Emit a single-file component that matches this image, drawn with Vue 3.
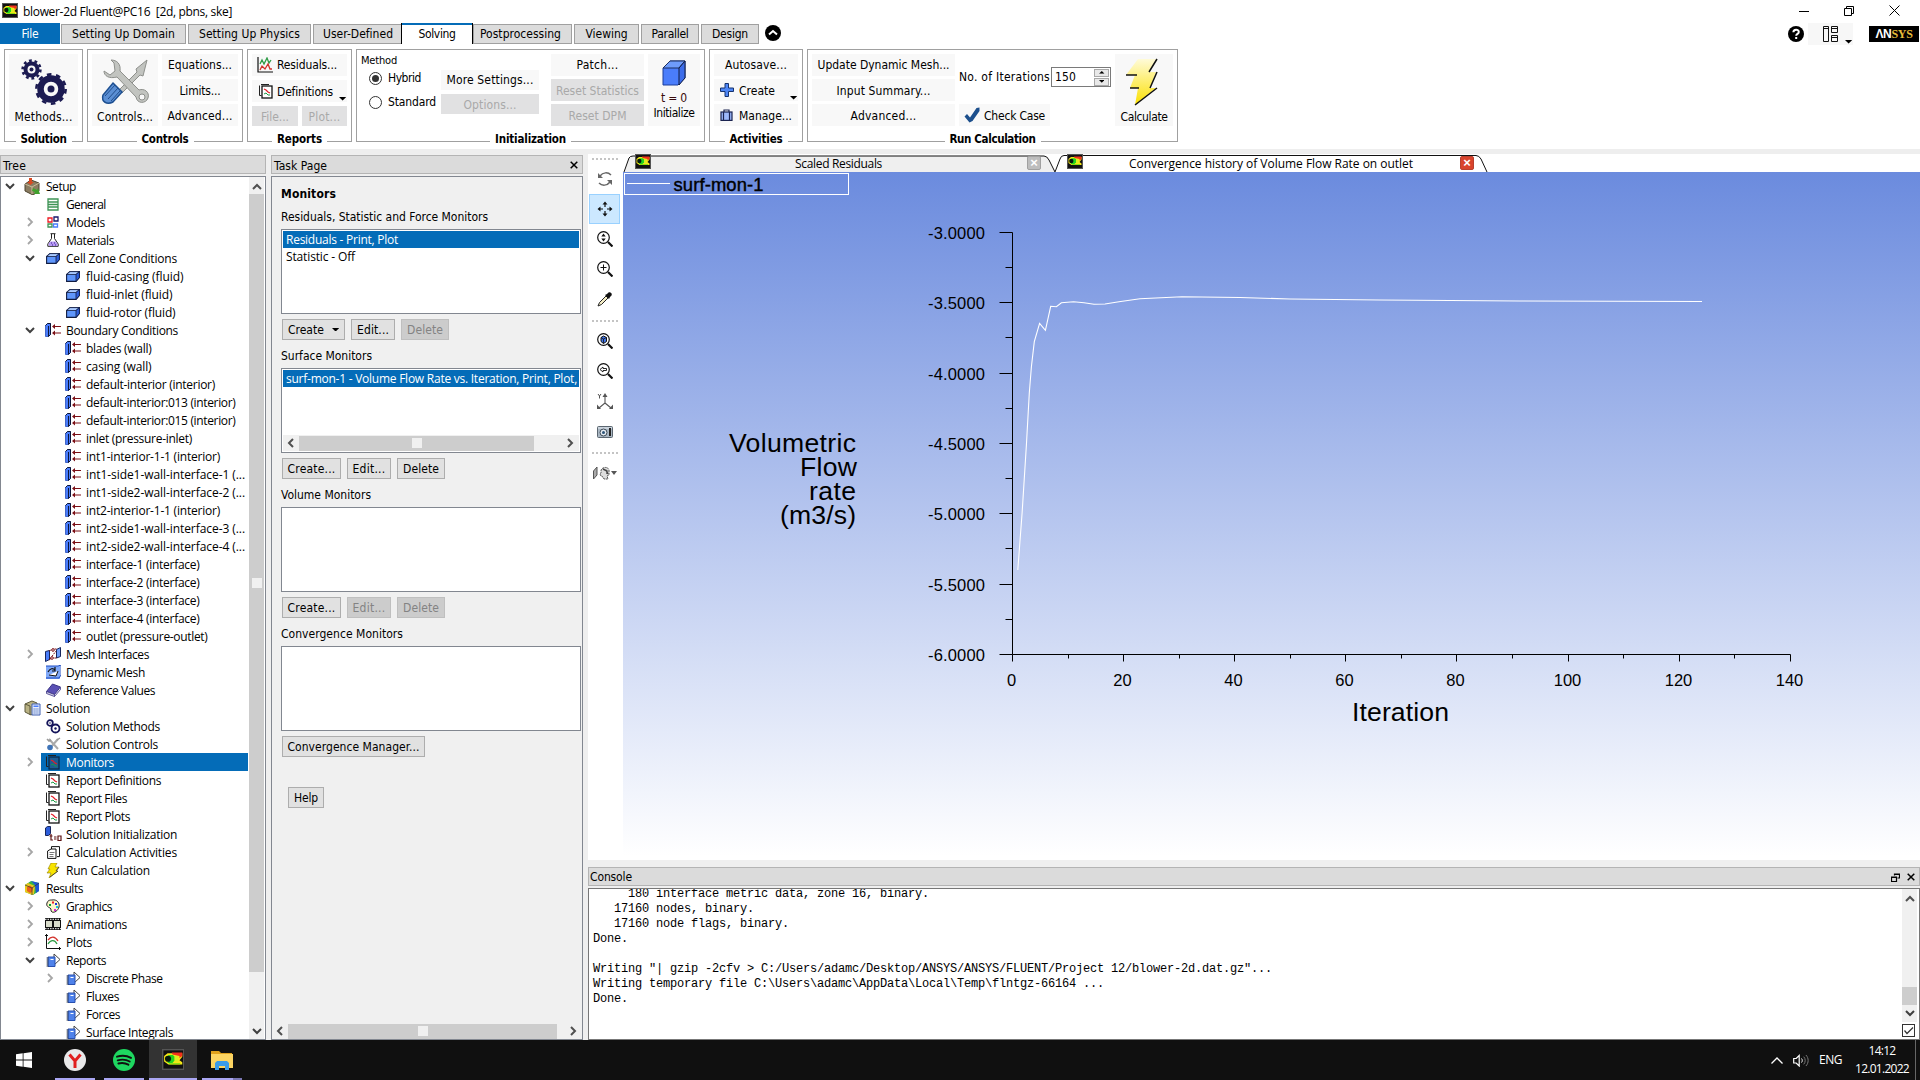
<script setup>
import { h } from 'vue'

/* Spreads the letters of a label so that it takes a given width in pixels. */
const vFit = {
  mounted(el, { value }) {
    if (!value) return
    const n = el.textContent.length
    el.style.letterSpacing = (value - el.getBoundingClientRect().width) / n + 'px'
  }
}

const page = '<path d="M.5 1.500v10h2M2 .500h8" fill="none" stroke="#222"/><rect x="3" y="2" width="10" height="12" fill="FILL" stroke="INK" stroke-width="1.300"/><path d="M5 5l2 1 2 2 2 1" stroke="#e0202a" fill="none" stroke-width="1.200"/><path d="M5 10l2-1 2 2 2 0" stroke="#1b9b45" fill="none"/>'
const gear = (cx, cy, r, w, c) => `<circle cx="${cx}" cy="${cy}" r="${r}" fill="none" stroke="${c}" stroke-width="${w}"/><circle cx="${cx}" cy="${cy}" r="${r + w / 2 + 0.9}" fill="none" stroke="${c}" stroke-width="2.600" stroke-dasharray="${((r + w / 2 + 0.9) * 6.2832) / 20}"/><circle cx="${cx}" cy="${cy}" r="${r / 3}" fill="${c}"/>`
const lens = '<circle cx="6.500" cy="6.500" r="5.800" fill="#fff" stroke="#111" stroke-width="1.200"/><path d="M11 11l4.500 4.500" stroke="#111" stroke-width="2.200"/>'

const icons = {
  fluent: [16, 16, '<rect x=".5" y=".5" width="15" height="14" fill="#111" stroke="#555"/><path d="M1.500 5L4 3h10.500v2.500L12.500 8l2 1.500V11H4.500l-3-2z" fill="#f5e616"/><path d="M7 2.500h7.500V5l-2 1.500V5l-5-1z" fill="#f0301c"/><path d="M4.500 4.300h3.200l1.300 1v3L7.500 10H4z" fill="#22d31f"/><path d="M9 5h2.500v4H9z" fill="#d8f020"/><circle cx="4.300" cy="7" r="2.200" fill="#061a0c"/><path d="M5 10h8v1H5z" fill="#8ce010"/>'],
  gears: [50, 50, gear(12.500, 11.500, 6, 4, '#1c1b52') + gear(32, 31, 10.500, 6.500, '#1c1b52')],
  tools: [50, 50, '<path d="M47 2L36 11l1 3-18 18 3 3 18-18 3 1z" fill="#c2c4c0" stroke="#8e908c"/><path d="M4 13l6 4 5-4-1-8-3-3c6 0 10 4 9 11l19 19c5-2 11 2 9 8-2 6-11 6-12-1l-19-20C9 21 4 18 4 13z" fill="#c2c4c0" stroke="#8e908c"/><circle cx="42" cy="39" r="3" fill="#f8f8f8" stroke="#8e908c"/><path d="M13 25l9 9-9 10c-6 3-12 0-10-7z" fill="#5b8fd4" stroke="#1d4f91" stroke-width="1.500"/><path d="M5 38l10-11M8 41l10-11M11 43l9-10" stroke="#234f8c"/>'],
  resid: [16, 16, '<path d="M1 0v15h15" fill="none" stroke="#111" stroke-width="1.200"/><path d="M3 7l2-4 2 4 3-6 2 5 2-3" fill="none" stroke="#2e9b46" stroke-width="1.300"/><path d="M3 13l2-4 3 3 3-5 2 5 2 0" fill="none" stroke="#d2322b" stroke-width="1.300"/>'],
  report: [14, 15, page.replace('FILL', '#fff').replace('INK', '#111')],
  reportSel: [14, 15, page.replace('FILL', '#1d5d93').replace('INK', '#0c2c4c')],
  cube: [24, 26, '<path d="M1 8l7-7h15v17l-7 7H1z" fill="#4a7dfb" stroke="#1c3f9a"/><path d="M1 8l7-7h15l-6 7z" fill="#6f9cfb" stroke="#1c2f60"/><path d="M17 8v17l6-7V1z" fill="#3c6cea" stroke="#111c40"/>'],
  plus: [14, 14, '<path d="M5 .5h3.500v4.500h5V8.500h-5v5H5v-5H.5V5H5z" fill="#4e86f5" stroke="#16336e"/>'],
  bag: [13, 12, '<rect x="1" y="3" width="11" height="8.400" fill="#9db9fb" stroke="#1a2350" stroke-width="1.200"/><path d="M4 3V1h5v2M3.500 3v8M9.500 3v8" fill="none" stroke="#1a2350" stroke-width="1.200"/>'],
  check: [16, 16, '<path d="M.5 9.500L3 7l3 3.500L12.500 1l3-.500v3.500L8.500 14l-3 1.500z" fill="#1c4f8c"/>'],
  bolt: [34, 48, '<defs><linearGradient id="bg" x1="0" y1="0" x2="0" y2="1"><stop offset="0" stop-color="#fffbd8"/><stop offset="1" stop-color="#fbe000"/></linearGradient></defs><path d="M13 1h18l-7 13h7l-6 16h6L10 47l3-17H5l5-13H1z" fill="url(#bg)"/><path d="M32 1l-8 13M1 17h11M32 14l-7 16M5 30h9M32 30L10 47" stroke="#111" stroke-width="1.500" fill="none"/>'],
  boltS: [14, 15, '<path d="M5 0h6L9 4h4l-3 4h2L3 15l2-5H1l3-4H2z" fill="#f8e400" stroke="#8d7a00" stroke-width=".6"/><path d="M13 4l-3 4M12 8l-8 6" stroke="#333" stroke-width=".8"/>'],
  up: [16, 16, '<circle cx="8" cy="8" r="8" fill="#000"/><path d="M4 9.500L8 6l4 3.500" fill="none" stroke="#fff" stroke-width="2"/>'],
  help: [16, 16, '<circle cx="8" cy="8" r="8" fill="#000"/><path d="M5.400 6.300C5.400 3 10.800 3 10.800 6c0 2-2.600 1.800-2.600 3.800M8.200 11v2" fill="none" stroke="#fff" stroke-width="2"/>'],
  layout: [16, 16, '<path d="M.5.500h5v15h-5zM.5 2.500h5M8.500.500h6v6h-6zM8.500 2.500h6M8.500 9.500h6v6h-6zM8.500 11.500h6" fill="none" stroke="#111"/>'],
  min: [10, 10, '<path d="M0 5.500h10" stroke="#000"/>'],
  restore: [10, 10, '<path d="M.5 2.500h7v7h-7zM2.500 2.500v-2h7v7h-2" fill="none" stroke="#000"/>'],
  close: [11, 11, '<path d="M.5.500l10 10M10.500.500l-10 10" stroke="#000"/>'],
  x: [8, 8, '<path d="M.7.700l6.600 6.600M7.300.700L.7 7.300" stroke="#000" stroke-width="1.500"/>'],
  float: [9, 9, '<path d="M3.500 2.500v-1.500h5v4h-2M.5 4h5v4.500h-5zM.5 4.500h5M3.500 1.500h5" fill="none" stroke="#000" stroke-width="1.200"/>'],
  setup: [17, 17, '<path d="M1 6l6-4 8 3v8l-6 4-8-4z" fill="#8b7d62" stroke="#4d432e"/><path d="M1 6l7 3 7-4M8 9v7" stroke="#c9bc98" fill="none"/><path d="M5 0h3v4h2L6.500 7 3 4h2z" fill="#d84a22"/><path d="M9 10l4 2 1-2 2 6h-6l1-2-3-1z" fill="#41a02e"/>'],
  general: [12, 13, '<path d="M1 1h10v11H1zM1 4h10M1 6.500h10M1 9h10" fill="none" stroke="#3e9455" stroke-width="1.300"/>'],
  models: [12, 12, '<path d="M1 2h4v4H1z" stroke="#ee1c24" fill="none" stroke-width="1.300"/><path d="M7 1h4v4H7z" stroke="#1a1a6c" fill="none" stroke-width="1.300"/><path d="M1 8h4v3H1z" stroke="#3e9455" fill="none" stroke-width="1.300"/><path d="M6.500 8h4v3h-4z" stroke="#4a7dfb" fill="none" stroke-width="1.300"/>'],
  flask: [12, 14, '<path d="M3.500.700h5M4.500 1v4.500L.8 11v2.300h10.400V11L7.500 5.500V1" fill="#fff" stroke="#222"/><path d="M3 8.500h6l2 3.500-1 1H2L1.400 11z" fill="#b79af0"/><path d="M4 10h1M7 10h1M5 12h1M8 12h1" stroke="#3a1aa0"/>'],
  zone: [14, 11, '<path d="M.6 3.500L4 .6h9.400v6L10 10.400H.6z" fill="#5f96fb" stroke="#111c40" stroke-width="1.100"/><path d="M.6 3.500L4 .6h9.400L10 3.500z" fill="#a9c9ff" stroke="#111c40" stroke-width=".8"/><path d="M10 3.500v7l3.400-4v-6z" fill="#2c5cda" stroke="#111c40" stroke-width=".8"/>'],
  bc: [16, 14, '<path d="M.5 2.500l2-2h3v11l-2 2h-3z" fill="#4a7dfb" stroke="#2c50b8" stroke-width=".8"/><path d="M.5 2.500l2-2h3v11l-2 2M3.500 3v10.500" fill="none" stroke="#0c1638"/><path d="M8 3.500h8M8 10h8" stroke="#7c1016" stroke-width="1.200"/><path d="M7 3.500L10 1v5zM7 10l3-2.500v5z" fill="#7c1016"/>'],
  mesh: [16, 15, '<path d="M.5 4.500l4-1v9l-4 2z" fill="#4a7dfb" stroke="#16265c"/><path d="M11.500 2.500l4-2v9l-4 1.500z" fill="#6e9dfb" stroke="#16265c"/><path d="M4 4l4-2 4 0M4 13l3-2 5 0M5 12l6-8" stroke="#7c1016" fill="none" stroke-dasharray="2 1"/><circle cx="8" cy="3" r="1.300" fill="#fff" stroke="#7c1016"/><circle cx="7" cy="11" r="1.300" fill="#fff" stroke="#7c1016"/>'],
  dyn: [15, 14, '<path d="M0 1h14v13H0z" fill="#7fa8f8"/><path d="M0 1h12l3-1v10l-2 3H0" fill="none" stroke="#1c4ac0"/><path d="M3 10l7 1 2-5" fill="#fff" stroke="#111"/><path d="M2 7c2-4 5-4 7-2M9 2v4H6" fill="none" stroke="#111" stroke-width="1.200"/>'],
  book: [15, 14, '<path d="M.5 8.500L6.500 1l8 3-6 7.500z" fill="#5a50b4" stroke="#3b3484"/><path d="M.5 8.500v2l8 3v-2zM8.500 13.500l6-7v-2" fill="#d6d4e8" stroke="#3b3484" stroke-width=".8"/>'],
  solution: [17, 16, '<path d="M1 4l7-3 5 2v9l-6 3-6-3z" fill="#b9b284" stroke="#5e5a3c"/><path d="M1 4l5 2v9" fill="none" stroke="#5e5a3c"/><path d="M8 4h8v11H8z" fill="#e8eefc" stroke="#3e5fb0"/><path d="M9.500 5.500h5v1.500h-5z" fill="#4a7dfb"/><path d="M9.500 9h5M9.500 11h5M9.500 13h5" stroke="#4a6fc0" stroke-dasharray="1.300 .6"/>'],
  gearsS: [15, 15, '<circle cx="4" cy="4" r="2.800" fill="#fff" stroke="#14145a" stroke-width="1.800"/><circle cx="9.500" cy="9.500" r="4" fill="#fff" stroke="#14145a" stroke-width="1.800"/><circle cx="9.500" cy="9.500" r="1.200" fill="#14145a"/><circle cx="4" cy="4" r=".8" fill="#14145a"/>'],
  toolsS: [15, 14, '<path d="M3 2l9 10M12 2L5 10" stroke="#aaa" stroke-width="2"/><path d="M1 2l2 2 2-1M14 1l-3 2" stroke="#999" fill="none" stroke-width="1.500"/><circle cx="4" cy="10.500" r="2.800" fill="#3f74b8"/>'],
  init: [17, 16, '<path d="M.5 2l2-1.500h3v7l-2 2h-3z" fill="#2c5cda" stroke="#16265c"/><path d="M6 8v6h2M4.500 10h3M9 11h2.500M9 13h2.500M13 10h3v4.500h-3z" fill="none" stroke="#5c1010" stroke-width="1.200"/>'],
  acts: [13, 13, '<path d="M4.500 3V.6h8v10H10" fill="#fff" stroke="#111"/><path d="M.6 5L4 3h5v9.400H.6z" fill="#fff" stroke="#111"/><path d="M2.500 6.500h5M2.500 8.500h4M2.500 10.500h4" stroke="#777"/>'],
  results: [16, 16, '<path d="M1 5l6-4 8 2v8l-6 4-8-3z" fill="#35b44a"/><path d="M7 1l8 2v8l-3 2-1-8z" fill="#1f55d6"/><path d="M1 5l3-2 7 3-1 8-2 1-7-3z" fill="#e8c81c"/><path d="M3 7l3-1.500L9 8l-1 4-2 1-3-2z" fill="#e8601c"/><path d="M1 5l7 3 7-5M8 8v7" fill="none" stroke="#333" stroke-width=".7"/>'],
  palette: [14, 14, '<path d="M6 1c5-1 8 3 7 7-1 4-5 6-7 5s0-3-2-4S0 7 1 4s3-3 5-3z" fill="#fbf6c8" stroke="#222"/><path d="M3 5h2v2H3z" fill="#00a030"/><path d="M6 2.500h2v2H6z" fill="#ee1c24"/><path d="M9 4h2v2H9z" fill="#1c30e0"/><path d="M10 7h2v2h-2z" fill="#18c8e0"/><path d="M8 10h2v2H8z" fill="#e01ce0"/>'],
  film: [16, 12, '<rect width="16" height="12" fill="#111"/><path d="M1 3h6v6H1zM9 3h6v6H9z" fill="#d9dccb"/><path d="M0 1.300h16M0 10.700h16" stroke="#fff" stroke-dasharray="1.500 1"/>'],
  plots: [16, 16, '<path d="M1.500 0v14.500H16M0 2l1.500-1.500L3 2M14 13l1.500 1.500L14 16" fill="none" stroke="#111"/><path d="M3 6c3-4 7-4 10 1" fill="none" stroke="#d2322b" stroke-width="1.300"/><path d="M3 10c3-5 7-4 9 0" fill="none" stroke="#2e9b46" stroke-width="1.300"/>'],
  reports: [15, 14, '<path d="M8 1l6 5.500L8 12z" fill="#fff" stroke="#444"/><path d="M2 4h7v9.500H2z" fill="#4f82ea" stroke="#2850b0"/><path d="M4.500 6.500h3" stroke="#fff"/><path d="M.5 5h2M.5 7h2M.5 9h2M.5 11h2M.5 13h2" stroke="#222" stroke-width=".8"/>'],
  rotate: [16, 16, '<path d="M3 5c3-4 8-4 11-1M13 11c-3 4-8 4-11 1" fill="none" stroke="#666" stroke-width="1.500"/><path d="M1 2v5h5zM15 14V9h-5z" fill="#666"/>'],
  move: [16, 16, '<path d="M8 2v4M8 10v4M2 8h4M10 8h4" stroke="#111" stroke-width="1.200"/><path d="M8 .500l2.500 3h-5zM8 15.500l2.500-3h-5zM.5 8l3-2.500v5zM15.500 8l-3-2.500v5z" fill="#111"/>'],
  zoomUD: [16, 16, lens + '<path d="M6.500 2.500L8.700 5.500H4.300zM6.500 10.500L8.700 7.500H4.300z" fill="#111"/>'],
  zoomIn: [16, 16, lens + '<path d="M6.500 3.500v6M3.500 6.500h6" stroke="#111"/>'],
  zoomFit: [16, 16, lens + '<path d="M4 4.500L6.500 3 9.500 4.500v4l-3 2L4 8.500z" fill="#3f74e8" stroke="#111"/><path d="M4 4.500L6.500 6l3-1.500M6.500 6v4.500" fill="none" stroke="#111" stroke-width=".8"/>'],
  zoomPrev: [16, 16, lens + '<path d="M3 6.500L6 4v1.500h3.500v2H6V9z" fill="none" stroke="#111" stroke-width=".9"/>'],
  dropper: [15, 15, '<path d="M1 14l1.500-3.500L9 4l2 2-6.500 6.500z" fill="#f3ecc4" stroke="#222"/><path d="M8 3l4 4 1-2 1.500-1.500c1-2-1-4-3-3L10 2z" fill="#111"/>'],
  axes: [16, 17, '<path d="M8 2v8L2 15M8 10l6 5" fill="none" stroke="#555" stroke-width="1.100"/><path d="M8 0l2.500 4h-5zM0 16v-4.500l4 4.500zM16 16v-4.500L12 16z" fill="#555"/><path d="M1 1l1.500 2L4 1M2.500 3v2.500" stroke="#555" fill="none"/>'],
  camera: [16, 13, '<rect x=".5" y="1.500" width="15" height="11" rx="1" fill="#a9b6c2" stroke="#5b6670"/><path d="M1 3h14" stroke="#e8eef4"/><circle cx="6.500" cy="7.500" r="3.500" fill="#e4eaf0" stroke="#3e4a56"/><circle cx="6.500" cy="7.500" r="1.500" fill="#2d5478"/><path d="M12 3h2v8h-2z" fill="#222"/>'],
  head: [24, 14, '<path d="M.5 5L4 1v8l-3.500 4z" fill="#aaa" stroke="#555"/><path d="M8 5c0-4 7-5 8-1v5l-2 1 1 3h-4l-1-2-2-1-1-2 1-1z" fill="#ddd" stroke="#555" stroke-dasharray="2 .7"/><path d="M10 3l4 2v3M13 4l2 4" stroke="#444" fill="none" stroke-width="1.400"/><path d="M18 5h6l-3 4z" fill="#555"/>'],
  win: [16, 16, '<path d="M0 2.300L6.700 1.300V7.600H0zM7.500 1.200L16 0v7.600H7.500zM0 8.400h6.700v6.300L0 13.700zM7.500 8.400H16V16l-8.500-1.200z" fill="#fff"/>'],
  yandex: [22, 22, '<circle cx="11" cy="11" r="11" fill="#e9e9ea"/><path d="M5.500 5.500L11 12l5.500-6.500M11 11.500V19" fill="none" stroke="#e01f1f" stroke-width="3"/>'],
  spotify: [22, 22, '<circle cx="11" cy="11" r="11" fill="#1ed760"/><path d="M4 7.700c5-1.500 10-1 14 1.200M4.700 11.300c4-1.100 8.500-.8 12 1.200M5.400 14.500c3.500-.9 7-.5 10 1.200" fill="none" stroke="#101010" stroke-width="1.900" stroke-linecap="round"/>'],
  folder: [22, 20, '<path d="M0 1h8l2 2h11v4H0z" fill="#e0a11c"/><path d="M0 4h22v14H0z" fill="#fcd462"/><path d="M4 20v-7l2-2h10l2 2v7h-4v-4H8v4z" fill="#3a9be8"/>'],
  tray: [12, 7, '<path d="M.5 6.500L6 1l5.500 5.500" fill="none" stroke="#fff" stroke-width="1.300"/>'],
  sound: [16, 13, '<path d="M.7 4.500h2.500l3-3v10.500l-3-3H.7z" fill="none" stroke="#fff" stroke-width="1.200"/><path d="M8.500 4.500c1 1 1 3 0 4" fill="none" stroke="#fff"/><path d="M10.700 2.700c2 2 2 5.600 0 7.600M12.900 1c3 3 3 8 0 11" fill="none" stroke="#777"/>'],
  cl: [7, 10, '<path d="M6 1L2 5l4 4" fill="none" stroke="#505050" stroke-width="2"/>'],
  cr: [7, 10, '<path d="M1 1l4 4-4 4" fill="none" stroke="#505050" stroke-width="2"/>'],
  cu: [10, 7, '<path d="M1 6l4-4 4 4" fill="none" stroke="#505050" stroke-width="2"/>'],
  cd: [10, 7, '<path d="M1 1l4 4 4-4" fill="none" stroke="#404040" stroke-width="2"/>'],
  crg: [7, 10, '<path d="M1 1l4 4-4 4" fill="none" stroke="#a6a6a6" stroke-width="1.800"/>'],
  down: [8, 4, '<path d="M0 0h8L4 4z" fill="#000"/>'],
  tick: [13, 13, '<rect x=".5" y=".5" width="12" height="12" fill="#fff" stroke="#333"/><path d="M2.500 6.500L5 9.500l6-6" fill="none" stroke="#333" stroke-width="1.200"/>']
}

const Icon = (props) => {
  const [w, ht, body] = icons[props.name]
  const s = props.scale || 1
  return h('svg', { class: 'ic', viewBox: `0 0 ${w} ${ht}`, width: w * s, height: ht * s, innerHTML: body })
}
Icon.props = ['name', 'scale']

const tabs = [
  ['File', 60, 17, 'file'], ['Setting Up Domain', 125, 103], ['Setting Up Physics', 123, 101], ['User-Defined', 89, 70, 'join'],
  ['Solving', 72, 37, 'on'], ['Postprocessing', 99, 81, 'post'], ['Viewing', 65, 42], ['Parallel', 58, 37], ['Design', 58, 36]
]

const raw = `0|v|setup|Setup|30
1||general|General|39.5
1|>|models|Models|39
1|>|flask|Materials|48
1|v|zone|Cell Zone Conditions|111
2||zone|fluid-casing (fluid)|97.5
2||zone|fluid-inlet (fluid)|86.5
2||zone|fluid-rotor (fluid)|89.5
1|v|bc|Boundary Conditions|112
2||bc|blades (wall)|65.5
2||bc|casing (wall)|65.5
2||bc|default-interior (interior)|129
2||bc|default-interior:013 (interior)|149.5
2||bc|default-interior:015 (interior)|149.5
2||bc|inlet (pressure-inlet)|106
2||bc|int1-interior-1-1 (interior)|134
2||bc|int1-side1-wall-interface-1 (...|159
2||bc|int1-side2-wall-interface-2 (...|159
2||bc|int2-interior-1-1 (interior)|134
2||bc|int2-side1-wall-interface-3 (...|159
2||bc|int2-side2-wall-interface-4 (...|159
2||bc|interface-1 (interface)|113.5
2||bc|interface-2 (interface)|113.5
2||bc|interface-3 (interface)|113.5
2||bc|interface-4 (interface)|113.5
2||bc|outlet (pressure-outlet)|121.5
1|>|mesh|Mesh Interfaces|83
1||dyn|Dynamic Mesh|79
1||book|Reference Values|89
0|v|solution|Solution|44
1||gearsS|Solution Methods|94
1||toolsS|Solution Controls|92
1|>|reportSel|Monitors|48
1||report|Report Definitions|95
1||report|Report Files|61
1||report|Report Plots|64
1||init|Solution Initialization|111
1|>|acts|Calculation Activities|111
1||boltS|Run Calculation|84
0|v|results|Results|37
1|>|palette|Graphics|46
1|>|film|Animations|61
1|>|plots|Plots|26
1|v|reports|Reports|40
2|>|reports|Discrete Phase|76.5
2||reports|Fluxes|33
2||reports|Forces|34
2||reports|Surface Integrals|87`
const tree = raw.split('\n').map((l) => {
  const [lv, ch, icon, text, w] = l.split('|')
  return { lv, ch, icon, text, w: +w }
})

const tools = ['dots', 'rotate', 'move', 'zoomUD', 'zoomIn', 'dropper', 'dots', 'zoomFit', 'zoomPrev', 'axes', 'camera', 'dots', 'head']
const toolH = [10, 30, 30, 29, 31, 31, 12, 28, 31, 30, 30, 14, 26]

const consoleLines = [
  '     180 interface metric data, zone 16, binary.',
  '   17160 nodes, binary.',
  '   17160 node flags, binary.',
  'Done.',
  '',
  'Writing "| gzip -2cfv > C:/Users/adamc/Desktop/ANSYS/ANSYS/FLUENT/Project 12/blower-2d.dat.gz"...',
  'Writing temporary file C:\\Users\\adamc\\AppData\\Local\\Temp\\flntgz-66164 ...',
  'Done.'
]

const X0 = 389.5
const Y0 = 60.5
const yTicks = [0, 1, 2, 3, 4, 5, 6].map((i) => ({ y: Math.round(i * 70.3) + Y0, t: (-3 - i * 0.5).toFixed(4) }))
const yMinor = [0, 1, 2, 3, 4, 5].map((i) => Math.round((i + 0.5) * 70.3) + Y0)
const xTicks = [0, 1, 2, 3, 4, 5, 6, 7].map((i) => ({ x: Math.round(i * 111.1) + X0, t: i * 20 }))
const xMinor = [0, 1, 2, 3, 4, 5, 6].map((i) => Math.round((i + 0.5) * 111.1) + X0)
const curve = [
  [1017.8, 570], [1022.1, 513], [1026.4, 445], [1029.3, 393], [1031.4, 366.7], [1034.3, 341.7], [1039.6, 323.3], [1045.4, 330.3],
  [1050.7, 306.3], [1056.4, 306.7], [1061.4, 302.7], [1073.6, 301.7], [1084, 302.7], [1094, 304.3], [1105, 304], [1119, 301.7],
  [1140, 298.7], [1182, 296.7], [1240, 297.5], [1290, 299], [1380, 300], [1520, 301], [1702, 301.5]
].map(([x, y]) => `${x - 623},${y - 172}`).join(' ')
</script>

<template>
  <div class="app">
    <header class="title">
      <Icon name="fluent" />
      <span class="title-text ui2"><span v-fit="209">blower-2d Fluent@PC16&nbsp; [2d, pbns, ske]</span></span>
      <div class="wctl"><Icon name="min" /><Icon name="restore" /><Icon name="close" /></div>
    </header>

    <nav class="tabs">
      <div v-for="t in tabs" :key="t[0]" class="tab" :class="t[3]" :style="{ width: t[1] + 'px' }"><span v-fit="t[2]">{{ t[0] }}</span></div>
      <Icon class="collapse" name="up" />
      <div class="right-tools">
        <Icon name="help" />
        <div class="lay"><Icon name="layout" /><Icon class="dd" name="down" scale="0.9" /></div>
        <div class="ansys"><b>&Lambda;N</b><i>SYS</i></div>
      </div>
    </nav>

    <section class="ribbon">
      <div class="group" style="width: 79px">
        <div class="row">
          <div class="btn big" style="width: 69px"><Icon name="gears" /><span v-fit="58">Methods...</span></div>
        </div>
        <b class="cap"><span v-fit="46">Solution</span></b>
      </div>
      <div class="group" style="width: 156px">
        <div class="row">
          <div class="btn big" style="width: 66px"><Icon name="tools" /><span v-fit="56">Controls...</span></div>
          <div class="col" style="width: 76px">
            <div class="btn"><span v-fit="64">Equations...</span></div>
            <div class="btn"><span v-fit="41">Limits...</span></div>
            <div class="btn"><span v-fit="65">Advanced...</span></div>
          </div>
        </div>
        <b class="cap"><span v-fit="47">Controls</span></b>
      </div>
      <div class="group" style="width: 105px">
        <div class="row">
          <div class="col" style="width: 95px">
            <div class="btn lead"><Icon name="resid" /><span v-fit="60">Residuals...</span></div>
            <div class="btn lead"><Icon class="ml2" name="report" /><span v-fit="56">Definitions</span><Icon class="dd" name="down" scale="0.9" /></div>
            <div class="pair">
              <div class="btn off" style="width: 46px"><span v-fit="28">File...</span></div>
              <div class="btn off" style="width: 45px"><span v-fit="32">Plot...</span></div>
            </div>
          </div>
        </div>
        <b class="cap"><span v-fit="45">Reports</span></b>
      </div>
      <div class="group" style="width: 349px">
        <div class="row">
          <div class="method">
            <span class="mlabel"><span v-fit="36">Method</span></span>
            <label><i class="radio sel"></i><span v-fit="33">Hybrid</span></label>
            <label><i class="radio"></i><span v-fit="48">Standard</span></label>
          </div>
          <div class="col mset" style="width: 98px">
            <div class="btn"><span v-fit="87">More Settings...</span></div>
            <div class="btn off"><span v-fit="53">Options...</span></div>
          </div>
          <div class="col" style="width: 93px">
            <div class="btn"><span v-fit="42">Patch...</span></div>
            <div class="btn off"><span v-fit="83">Reset Statistics</span></div>
            <div class="btn off"><span v-fit="58">Reset DPM</span></div>
          </div>
          <div class="btn big init" style="width: 52px"><Icon name="cube" /><span class="t0" v-fit="26">t = 0</span><span v-fit="41">Initialize</span></div>
        </div>
        <b class="cap"><span v-fit="71">Initialization</span></b>
      </div>
      <div class="group" style="width: 94px">
        <div class="row">
          <div class="col" style="width: 84px">
            <div class="btn"><span v-fit="62">Autosave...</span></div>
            <div class="btn lead act"><Icon name="plus" /><span v-fit="36">Create</span><Icon class="dd" name="down" scale="0.9" /></div>
            <div class="btn lead act"><Icon name="bag" /><span v-fit="53">Manage...</span></div>
          </div>
        </div>
        <b class="cap"><span v-fit="53">Activities</span></b>
      </div>
      <div class="group" style="width: 371px">
        <div class="row">
          <div class="col" style="width: 143px">
            <div class="btn"><span v-fit="132">Update Dynamic Mesh...</span></div>
            <div class="btn"><span v-fit="94">Input Summary...</span></div>
            <div class="btn"><span v-fit="66">Advanced...</span></div>
          </div>
          <div class="iter">
            <div class="iterrow"><span v-fit="91">No. of Iterations</span>
              <div class="spin"><span v-fit="21">150</span><div class="sp"><i><Icon name="down" scale="0.7" class="flip" /></i><i><Icon name="down" scale="0.7" /></i></div></div>
            </div>
            <div class="btn lead chk"><Icon name="check" /><span v-fit="61">Check Case</span></div>
          </div>
          <div class="btn big bolt" style="width: 58px"><Icon name="bolt" /><span v-fit="47">Calculate</span></div>
        </div>
        <b class="cap"><span v-fit="86">Run Calculation</span></b>
      </div>
    </section>

    <main class="work">
      <aside class="dock tree-dock">
        <div class="dock-title"><span v-fit="23">Tree</span></div>
        <div class="panel tree">
          <div class="rows">
            <div v-for="(r, i) in tree" :key="i" class="trow" :class="['l' + r.lv, { selected: r.text === 'Monitors' }]">
              <span class="chev"><Icon v-if="r.ch === 'v'" name="cd" /><Icon v-if="r.ch === '>'" name="crg" /></span>
              <span class="lab"><span class="tic"><Icon :name="r.icon" /></span><span class="ttext" v-fit="r.w">{{ r.text }}</span></span>
            </div>
          </div>
          <div class="vscroll"><Icon name="cu" /><div class="thumb"><i></i></div><Icon class="dn" name="cd" /></div>
        </div>
      </aside>

      <aside class="dock task-dock">
        <div class="dock-title"><span v-fit="53">Task Page</span><Icon name="x" /></div>
        <div class="panel task">
          <div class="body">
            <b class="head"><span v-fit="55">Monitors</span></b>
            <div class="lbl first"><span v-fit="207">Residuals, Statistic and Force Monitors</span></div>
            <div class="list">
              <div class="item on"><span v-fit="112">Residuals - Print, Plot</span></div>
              <div class="item"><span v-fit="69">Statistic - Off</span></div>
            </div>
            <div class="btns">
              <button style="width: 63px"><span v-fit="36">Create</span><Icon name="down" scale="0.9" /></button>
              <button style="width: 44px"><span v-fit="32">Edit...</span></button>
              <button class="dis" style="width: 48px"><span v-fit="36">Delete</span></button>
            </div>
            <div class="lbl"><span v-fit="91">Surface Monitors</span></div>
            <div class="list">
              <div class="item on"><span v-fit="291">surf-mon-1 - Volume Flow Rate vs. Iteration, Print, Plot,</span></div>
              <div class="hscroll"><Icon name="cl" /><div class="hthumb" style="width: 235px"><i></i></div><Icon name="cr" /></div>
            </div>
            <div class="btns">
              <button style="width: 59px"><span v-fit="48">Create...</span></button>
              <button style="width: 44px"><span v-fit="33">Edit...</span></button>
              <button style="width: 48px"><span v-fit="36">Delete</span></button>
            </div>
            <div class="lbl"><span v-fit="90">Volume Monitors</span></div>
            <div class="list"></div>
            <div class="btns">
              <button style="width: 59px"><span v-fit="48">Create...</span></button>
              <button class="dis" style="width: 44px"><span v-fit="33">Edit...</span></button>
              <button class="dis" style="width: 48px"><span v-fit="36">Delete</span></button>
            </div>
            <div class="lbl"><span v-fit="122">Convergence Monitors</span></div>
            <div class="list"></div>
            <div class="btns"><button style="width: 143px"><span v-fit="132">Convergence Manager...</span></button></div>
            <div class="btns help"><button style="width: 36px"><span v-fit="24">Help</span></button></div>
          </div>
          <div class="hscroll bottom"><Icon name="cl" /><div class="hthumb" style="width: 269px"><i></i></div><Icon name="cr" /></div>
        </div>
      </aside>

      <div class="right">
        <div class="upper">
          <div class="toolbar">
            <div v-for="(t, i) in tools" :key="i" class="tool" :class="{ active: t === 'move' }" :style="{ height: toolH[i] + 'px' }">
              <i v-if="t === 'dots'" class="dots"></i><Icon v-else :name="t" />
            </div>
          </div>
          <div class="view">
            <div class="vtabs">
              <svg class="vshape" width="870" height="17">
                <path d="M1 17L6 3Q7 1 10 1H421Q424 1 426 5L432 17" fill="#efefef" stroke="#111" />
                <path d="M432 17L437 4Q438 .5 441 .5H853Q856 .5 858 4L864 17" fill="#fff" stroke="#111" />
              </svg>
              <div class="vt vt1"><Icon name="fluent" /><span class="ui2" v-fit="87">Scaled Residuals</span><i class="xb">×</i></div>
              <div class="vt vt2"><Icon name="fluent" /><span class="ui2" v-fit="284">Convergence history of Volume Flow Rate on outlet</span><i class="xb red">×</i></div>
            </div>
            <svg class="plot" width="1297" height="684">
              <defs><linearGradient id="sky" x1="0" y1="0" x2="0" y2="1"><stop offset="0" stop-color="#6b8bde" /><stop offset="1" stop-color="#fff" /></linearGradient></defs>
              <rect width="1297" height="684" fill="url(#sky)" />
              <rect x="1.500" y="1.500" width="224" height="21" fill="none" stroke="#fff" />
              <path d="M4 11.500H47" stroke="#fff" />
              <text x="50.500" y="18.500" font-size="18.400" textLength="90" stroke="#000" stroke-width=".4">surf-mon-1</text>
              <g font-size="26.600" text-anchor="end">
                <text x="233" y="280" textLength="127">Volumetric</text><text x="234" y="304" textLength="57">Flow</text><text x="233" y="328" textLength="47">rate</text><text x="233" y="352" textLength="76">(m3/s)</text>
              </g>
              <text x="777.500" y="549" font-size="26.600" text-anchor="middle" textLength="97">Iteration</text>
              <g stroke="#000" fill="none">
                <path :d="`M${X0} ${Y0}V482.500H1167.500`" />
                <path v-for="t in yTicks" :key="t.y" :d="`M${X0 - 13} ${t.y}h13`" />
                <path v-for="y in yMinor" :key="y" :d="`M${X0 - 7} ${y}h7`" />
                <path v-for="t in xTicks" :key="t.x" :d="`M${t.x} 482.500v7`" />
                <path v-for="x in xMinor" :key="x" :d="`M${x} 482.500v4`" />
              </g>
              <g font-size="16.500">
                <text v-for="t in yTicks" :key="t.t" x="362" :y="t.y + 6" text-anchor="end" textLength="57">{{ t.t }}</text>
                <text v-for="t in xTicks" :key="t.t" :x="t.x - 1" y="514" text-anchor="middle">{{ t.t }}</text>
              </g>
              <polyline :points="curve" fill="none" stroke="#fff" stroke-width="1.100" />
            </svg>
          </div>
        </div>
        <div class="console-title"><span v-fit="42">Console</span><Icon name="float" /><Icon name="x" /></div>
        <div class="console">
          <div class="log"><div v-for="(l, i) in consoleLines" :key="i" class="ln"><span v-fit="l.length * 7">{{ l }}</span></div></div>
          <div class="cside">
            <div class="cscroll"><Icon name="cu" /><div class="cth"></div><Icon name="cd" /></div>
            <Icon name="tick" />
          </div>
        </div>
      </div>
    </main>

    <footer class="taskbar">
      <div class="tb start"><Icon name="win" /></div>
      <div class="tb" style="width: 40px"><Icon name="yandex" /><u></u></div>
      <div class="tb" style="width: 40px; margin-left: 9px"><Icon name="spotify" /><u></u></div>
      <div class="tb cur" style="width: 48px; margin-left: 5px"><Icon name="fluent" scale="1.400" /><u></u></div>
      <div class="tb fold" style="width: 40px; margin-left: 5px"><Icon name="folder" /><u></u></div>
      <div class="tray">
        <Icon name="tray" /><Icon name="sound" /><span class="eng" v-fit="23">ENG</span>
        <div class="clock"><span v-fit="27">14:12</span><span v-fit="54">12.01.2022</span></div>
        <i class="peek"></i>
      </div>
    </footer>
  </div>
</template>

<style>
body { margin: 0; overflow: hidden; }
.ic { display: block; flex: none; }
</style>

<style scoped>
.app { width: 1920px; height: 1080px; overflow: hidden; display: flex; flex-direction: column; background: #fff; font: 12px/14px "DejaVu Sans Condensed", "DejaVu Sans", sans-serif; font-stretch: condensed; color: #000; }
.app * { box-sizing: border-box; }
span { white-space: pre; flex: none; }
.ui2 { font-family: "Open Sans", "Noto Sans", sans-serif; font-size: 12px; font-stretch: normal; }
.title { height: 23px; flex: none; display: flex; align-items: center; padding: 0 20px 2px 2px; }
.title-text { margin-left: 5px; padding-top: 3px; }
.wctl { margin-left: auto; display: flex; gap: 35px; align-items: center; }
.tabs { height: 21px; flex: none; display: flex; align-items: flex-end; gap: 2px; }
.tab { height: 20px; background: #dcdcdc; border: 1px solid #a0a0a0; display: flex; justify-content: center; align-items: center; }
.tab.file { height: 21px; background: #046cb8; border: 0; color: #fff; margin-right: -1px; }
.tab.join { border-right: 0; margin-right: -3px; }
.tab.on { height: 21px; background: #fff; border: solid #000; border-width: 0 1px; box-shadow: inset 0 2px #046cb8; }
.tab.post { margin-left: -2px; justify-content: flex-start; padding-left: 6px; }
.collapse { margin: 0 0 3px 4px; align-self: flex-end; }
.right-tools { margin-left: auto; display: flex; align-items: center; height: 21px; }
.lay { width: 45px; height: 22px; margin: 0 16px 0 4px; background: #f7f7f7; padding: 3px 0 0 15px; position: relative; }
.dd { position: absolute; right: 1px; bottom: 1px; }
.ansys { width: 50px; height: 16px; margin-right: 1px; background: #000; font: bold 12px/16px "Liberation Sans", sans-serif; text-align: center; color: #fff; letter-spacing: -.3px; }
.ansys i { color: #e8bd3a; font: bold 12px "Liberation Serif", serif; }
.ribbon { height: 110px; flex: none; display: flex; gap: 4px; padding: 5px 0 7px 4px; border-bottom: 5px solid #eee; }
.group { height: 93px; flex: none; border: 1px solid #a0a0a0; display: flex; flex-direction: column; align-items: center; }
.row { width: 100%; height: 76px; flex: none; padding: 4px 4px 0; display: flex; gap: 4px; }
.cap { margin-top: 6px; padding: 0 5px; background: #fff; font-size: 11.500px; line-height: 15px; }
.btn { height: 22px; flex: none; background: #f8f8f8; display: flex; align-items: center; justify-content: center; position: relative; }
.btn + .btn span, .chk span, .pair span { padding-top: 1px; }
.btn.off { background: #e1e1e2; color: #a9a9a9; }
.btn.big { height: 72px; flex-direction: column; justify-content: space-between; padding: 4px 0 2px; }
.btn.init { padding: 6px 0; }
.btn.bolt .ic { margin-left: -4px; }
.t0 { font-size: 12px; color: #3a0c0c; margin: 2px 0 -2px; }
.col { flex: none; height: 72px; display: flex; flex-direction: column; justify-content: space-between; }
.btn.lead { justify-content: flex-start; padding-left: 5px; gap: 4px; }
.btn.lead .ml2 { margin: 0 0 0 2px; }
.btn.act { padding-left: 6px; gap: 5px; }
.act + .act .ic { margin-right: 1px; }
.btn.chk { width: 91px; gap: 4px; }
.pair { display: flex; justify-content: space-between; }
.pair .btn { height: 20px; }
.method { width: 80px; flex: none; }
.mlabel { display: block; font-size: 11px; line-height: 14px; }
.method label { display: flex; align-items: center; gap: 6px; height: 24px; padding: 0 0 4px 8px; }
.radio { width: 13px; height: 13px; border: 1px solid #333; border-radius: 50%; background: #fff; padding: 2px; }
.radio.sel { background: #333 content-box; }
.mset { height: 44px; margin: 16px 0 0 -4px; }
.mset .btn { height: 20px; }
.mset + .col { margin-left: 8px; }
.iter { width: 152px; flex: none; display: flex; flex-direction: column; justify-content: space-between; height: 72px; }
.iterrow { display: flex; align-items: center; padding-top: 13px; gap: 1px; }
.spin { width: 60px; height: 20px; border: 1px solid #7a7a7a; display: flex; justify-content: space-between; align-items: center; padding: 1px 1px 1px 3px; }
.sp { width: 15px; height: 17px; display: flex; flex-direction: column; gap: 1px; }
.sp i { flex: 1; background: #e8e8e8; border: 1px solid #a8a8a8; display: flex; justify-content: center; align-items: center; }
.flip { transform: rotate(180deg); }
.work { height: 886px; flex: none; display: flex; background: #efefef; }
.dock { padding-top: 1px; flex: none; display: flex; flex-direction: column; }
.tree-dock { width: 266px; margin-right: 5px; }
.task-dock { width: 312px; margin-right: 5px; }
.dock-title, .console-title { height: 19px; flex: none; background: #dbdbdb; border: 1px solid #b4b4b4; padding: 1px 4px 0 2px; display: flex; align-items: center; }
.dock-title span { padding-top: 1px; }
.dock-title .ic { margin-left: auto; }
.panel { height: 864px; margin-top: 2px; border: 1px solid #828790; }
.tree { display: flex; background: #fff; overflow: hidden; }
.rows { flex: 1; min-width: 0; }
.trow { height: 18px; display: flex; align-items: center; font: 12px/18px "Open Sans", "Noto Sans", sans-serif; }
.chev { width: 20px; margin-left: -1px; margin-right: 1px; flex: none; display: flex; justify-content: center; }
.l1 { padding-left: 20px; }
.l2 { padding-left: 40px; }
.lab { flex: 1; display: flex; align-items: center; height: 18px; }
.tic { width: 20px; margin: 0 3px 0 2px; display: flex; justify-content: center; }
.l0 .tic { margin-left: 1px; margin-right: 4px; }
.ttext { position: relative; top: 1px; }
.selected .lab { background: #046cb8; color: #fff; margin-right: 1px; }
.vscroll { width: 15px; margin-right: 1px; background: #f0f0f0; display: flex; flex-direction: column; align-items: center; padding: 6px 0 4px; }
.thumb { width: 15px; height: 778px; margin-top: 4px; flex: none; background: #cdcdcd; display: flex; align-items: center; justify-content: center; }
.vscroll .dn { margin-top: auto; }
.thumb i, .hthumb i { width: 10px; height: 10px; background: #f0f0f0; }
.task { display: flex; flex-direction: column; background: #f0f0f0; }
.body { flex: 1; padding: 9px 1px 0 9px; display: flex; flex-direction: column; }
.head { height: 16px; line-height: 16px; }
.lbl { height: 28px; line-height: 32px; }
.lbl.first { height: 27px; line-height: 30px; }
.list { height: 85px; flex: none; background: #fff; border: 1px solid #828790; padding: 1px; display: flex; flex-direction: column; }
.item { height: 17px; line-height: 17px; padding-left: 3px; overflow: hidden; flex: none; font-family: "Open Sans", "Noto Sans", sans-serif; font-stretch: normal; }
.item.on { background: #046cb8; color: #fff; }
.btns { display: flex; gap: 6px; margin: 5px 0 0 1px; flex: none; }
button { height: 21px; padding: 0; font: inherit; color: #000; background: #e1e1e1; border: 1px solid #adadad; display: flex; align-items: center; justify-content: center; gap: 8px; }
button.dis { background: #ccc; border-color: #bfbfbf; color: #838383; }
.btns.help { margin: 30px 0 0 7px; }
.hscroll { height: 16px; margin-top: auto; background: #f0f0f0; display: flex; align-items: center; padding: 0 5px 0 4px; }
.hthumb { height: 15px; margin-left: 5px; background: #cdcdcd; display: flex; align-items: center; justify-content: center; }
.hscroll .ic:last-child { margin-left: auto; }
.right { flex: 1; min-width: 0; display: flex; flex-direction: column; }
.upper { height: 706px; flex: none; display: flex; background: #fff; border-bottom: 0; }
.toolbar { width: 35px; flex: none; }
.tool { width: 31px; margin-left: 1px; display: flex; align-items: center; justify-content: center; }
.tool.active { background: #cce8ff; border: 1px solid #99d1ff; }
.dots { width: 26px; height: 2px; background: repeating-linear-gradient(90deg, #c4c4c4 0 2px, transparent 2px 4px); }
.view { flex: 1; }
.vtabs { height: 18px; position: relative; display: flex; }
.vshape { position: absolute; left: 0; top: 1px; }
.vt { position: relative; display: flex; align-items: center; }
.vt .ic { margin-top: -2px; }
.vt span { padding-top: 1px; }
.vt1 { width: 418px; padding-left: 12px; }
.vt2 { width: 441px; padding-left: 26px; }
.vt1 span { margin-left: 144px; }
.vt2 span { margin-left: 46px; }
.xb { width: 14px; height: 14px; margin-left: auto; background: #bdbdbd; border: 1px solid #a0a0a0; color: #fff; font: bold 13px/11px "Liberation Sans", sans-serif; text-align: center; border-radius: 2px; }
.vt2 .xb { margin-right: 8px; }
.xb.red { background: #d9432c; border-color: #b8402e; }
.plot { display: block; font-family: "Liberation Sans", sans-serif; font-stretch: normal; }
.console-title { margin-top: 7px; padding: 1px 4px 0 1px; gap: 7px; }
.console-title .ic:nth-child(2) { margin-left: auto; }
.console { height: 152px; margin-top: 2px; flex: none; border: 1px solid #777; background: #fff; display: flex; overflow: hidden; }
.log { flex: 1; margin-top: -2px; padding-left: 4px; font: 12px/15px "Liberation Mono", monospace; }
.ln { height: 15px; }
.cside { width: 17px; display: flex; flex-direction: column; align-items: flex-start; gap: 2px; }
.cscroll { width: 15px; height: 133px; background: #f0f0f0; display: flex; flex-direction: column; align-items: center; padding: 6px 0 5px; }
.cth { width: 15px; height: 18px; margin-top: auto; margin-bottom: 5px; background: #cdcdcd; }
.taskbar { height: 40px; flex: none; background: #101010; display: flex; color: #fff; font-family: "Open Sans", sans-serif; font-stretch: normal; }
.tb { display: flex; align-items: center; justify-content: center; position: relative; }
.tb.start { width: 48px; margin-right: 7px; }
.tb u { position: absolute; left: 0; right: 0; bottom: 0; height: 2px; background: #aaa6f2; }
.tb.cur { background: #333; }
.tb.fold { justify-content: flex-start; padding-left: 9px; }
.tb.fold u { border-right: 9px solid #7b78b4; }
.tray { margin-left: auto; display: flex; align-items: center; }
.tray .ic { margin-right: 10px; }
.eng { margin-right: 13px; }
.clock { display: flex; flex-direction: column; align-items: center; line-height: 18px; margin-right: 6px; }
.peek { width: 1px; height: 40px; background: #666; margin-right: 4px; }
</style>
